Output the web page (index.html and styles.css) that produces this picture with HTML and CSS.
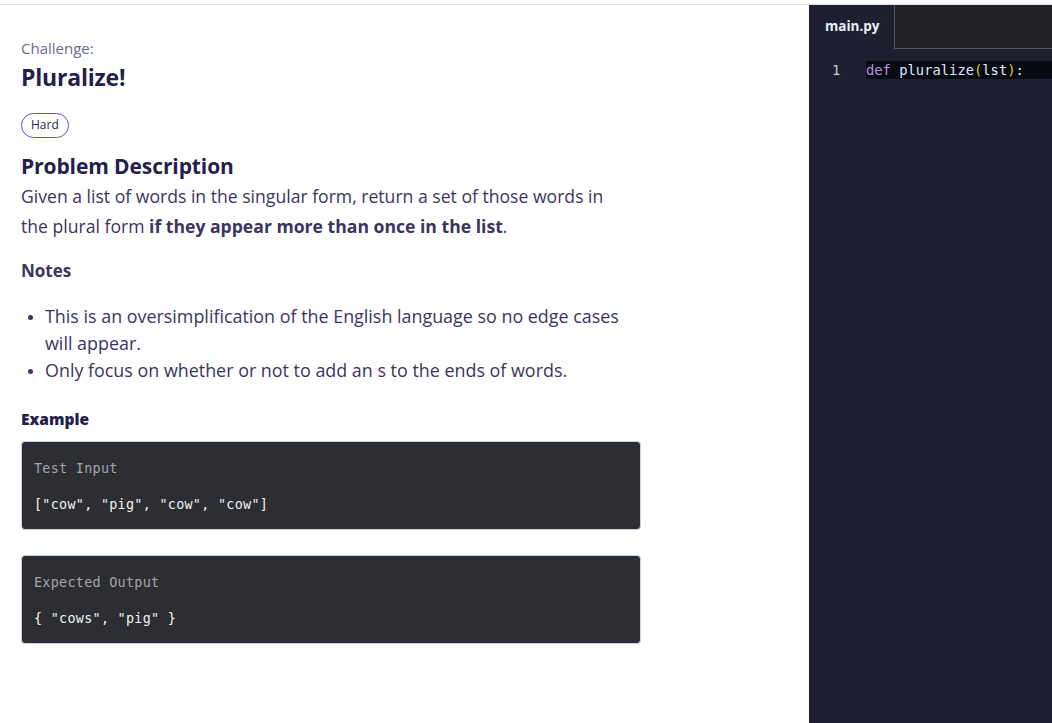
FILE: index.html
```html
<!DOCTYPE html>
<html lang="en">
<head>
<meta charset="utf-8">
<title>Pluralize!</title>
<link rel="stylesheet" href="styles.css">
</head>
<body>
<div class="topbar"></div>
<div class="layout">
  <main class="problem">
    <div class="eyebrow">Challenge:</div>
    <h1 class="title">Pluralize!</h1>
    <span class="badge">Hard</span>
    <h2 class="section-title">Problem Description</h2>
    <p class="desc">Given a list of words in the singular form, return a set of those words in the plural form <strong>if they appear more than once in the list</strong>.</p>
    <h3 class="sub-title">Notes</h3>
    <ul class="notes">
      <li>This is an oversimplification of the English language so no edge cases will appear.</li>
      <li>Only focus on whether or not to add an s to the ends of words.</li>
    </ul>
    <h4 class="example-title">Example</h4>
    <div class="codebox">
      <div class="codebox-label">Test Input</div>
      <div class="codebox-value">["cow", "pig", "cow", "cow"]</div>
    </div>
    <div class="codebox">
      <div class="codebox-label">Expected Output</div>
      <div class="codebox-value">{ "cows", "pig" }</div>
    </div>
  </main>
  <aside class="editor">
    <div class="tabs">
      <div class="tab">main.py</div>
      <div class="tab-fill"></div>
    </div>
    <div class="code">
      <div class="code-line">
        <span class="ln">1</span>
        <span class="src"><span class="kw">def</span> <span class="fn">pluralize</span><span class="paren">(</span>lst<span class="paren">)</span>:</span>
      </div>
    </div>
  </aside>
</div>
</body>
</html>
```
FILE: styles.css
```css
* { box-sizing: border-box; }
html, body { height: 100%; }
body {
  margin: 0;
  background: #ffffff;
  font-family: "Open Sans", Lato, sans-serif;
  color: #3b355f;
  display: flex;
  flex-direction: column;
}
.topbar {
  height: 5px;
  border-bottom: 1px solid #dde2ea;
  flex: none;
}
.layout {
  flex: 1;
  display: flex;
  min-height: 0;
}
.problem {
  flex: 1;
  padding: 33px 0 0 21px;
  max-width: 809px;
}
.problem > * { max-width: 620px; }
.eyebrow {
  font-size: 15px;
  line-height: 20px;
  color: #6d6a8c;
}
.title {
  margin: 4px 0 0;
  font-size: 23px;
  line-height: 30px;
  font-weight: 700;
  color: #25204a;
  letter-spacing: -0.2px;
}
.badge {
  display: block;
  width: fit-content;
  margin-top: 21px;
  height: 25px;
  padding: 0 9px;
  border: 1.5px solid #5b52e0;
  border-radius: 13px;
  font-size: 12px;
  line-height: 22px;
  color: #2b2550;
}
.section-title {
  margin: 13px 0 0;
  font-size: 21px;
  line-height: 30px;
  font-weight: 700;
  color: #25204a;
  letter-spacing: -0.1px;
}
.problem > .desc {
  margin: 0;
  max-width: 596px;
  font-size: 17.6px;
  line-height: 30px;
}
.desc strong { font-weight: 700; color: #3b355f; }
.sub-title {
  margin: 18px 0 0;
  font-size: 17px;
  line-height: 24px;
  font-weight: 700;
  color: #3b355f;
}
.problem > .notes {
  margin: 19.5px 0 0;
  max-width: 612px;
  padding-left: 24px;
  font-size: 17.9px;
  line-height: 27px;
}
.notes li::marker { font-size: 14px; }
.example-title {
  margin: 24.5px 0 0;
  font-size: 15.5px;
  line-height: 22px;
  font-weight: 800;
  color: #25204a;
}
.codebox {
  margin-top: 11px;
  height: 89px;
  background: #2d2e33;
  border: 1px solid #c9d1dd;
  border-radius: 4px;
  padding: 18px 12px 0;
  font-family: "DejaVu Sans Mono", "Liberation Mono", monospace;
  font-size: 13.4px;
  letter-spacing: 0.3px;
  line-height: 18px;
}
.codebox + .codebox { margin-top: 25px; }
.codebox-label { color: #a4a4a8; }
.codebox-value { color: #f2f2f2; margin-top: 18px; }

.editor {
  width: 243px;
  flex: none;
  background: #1e2030;
  display: flex;
  flex-direction: column;
}
.tabs {
  display: flex;
  height: 44px;
}
.tab {
  width: 85px;
  padding-left: 16px;
  font-family: "Open Sans", sans-serif;
  font-weight: 700;
  font-size: 13.5px;
  line-height: 42px;
  color: #eef0f6;
}
.tab-fill {
  flex: 1;
  background: #222226;
  border-left: 1px solid #55565c;
  border-bottom: 1px solid #55565c;
}
.code { padding-top: 12px; }
.code-line {
  display: flex;
  align-items: center;
  height: 18px;
  font-family: "DejaVu Sans Mono", "Liberation Mono", monospace;
  font-size: 13.8px;
}
.ln {
  width: 57px;
  padding-left: 23px;
  color: #c9cad2;
}
.src {
  flex: 1;
  height: 100%;
  background: #070b13;
  color: #e8ecf8;
  line-height: 18px;
  white-space: pre;
}
.kw { color: #c08ee0; }
.fn { color: #dfe3ff; }
.paren { color: #f1c40f; }
```
